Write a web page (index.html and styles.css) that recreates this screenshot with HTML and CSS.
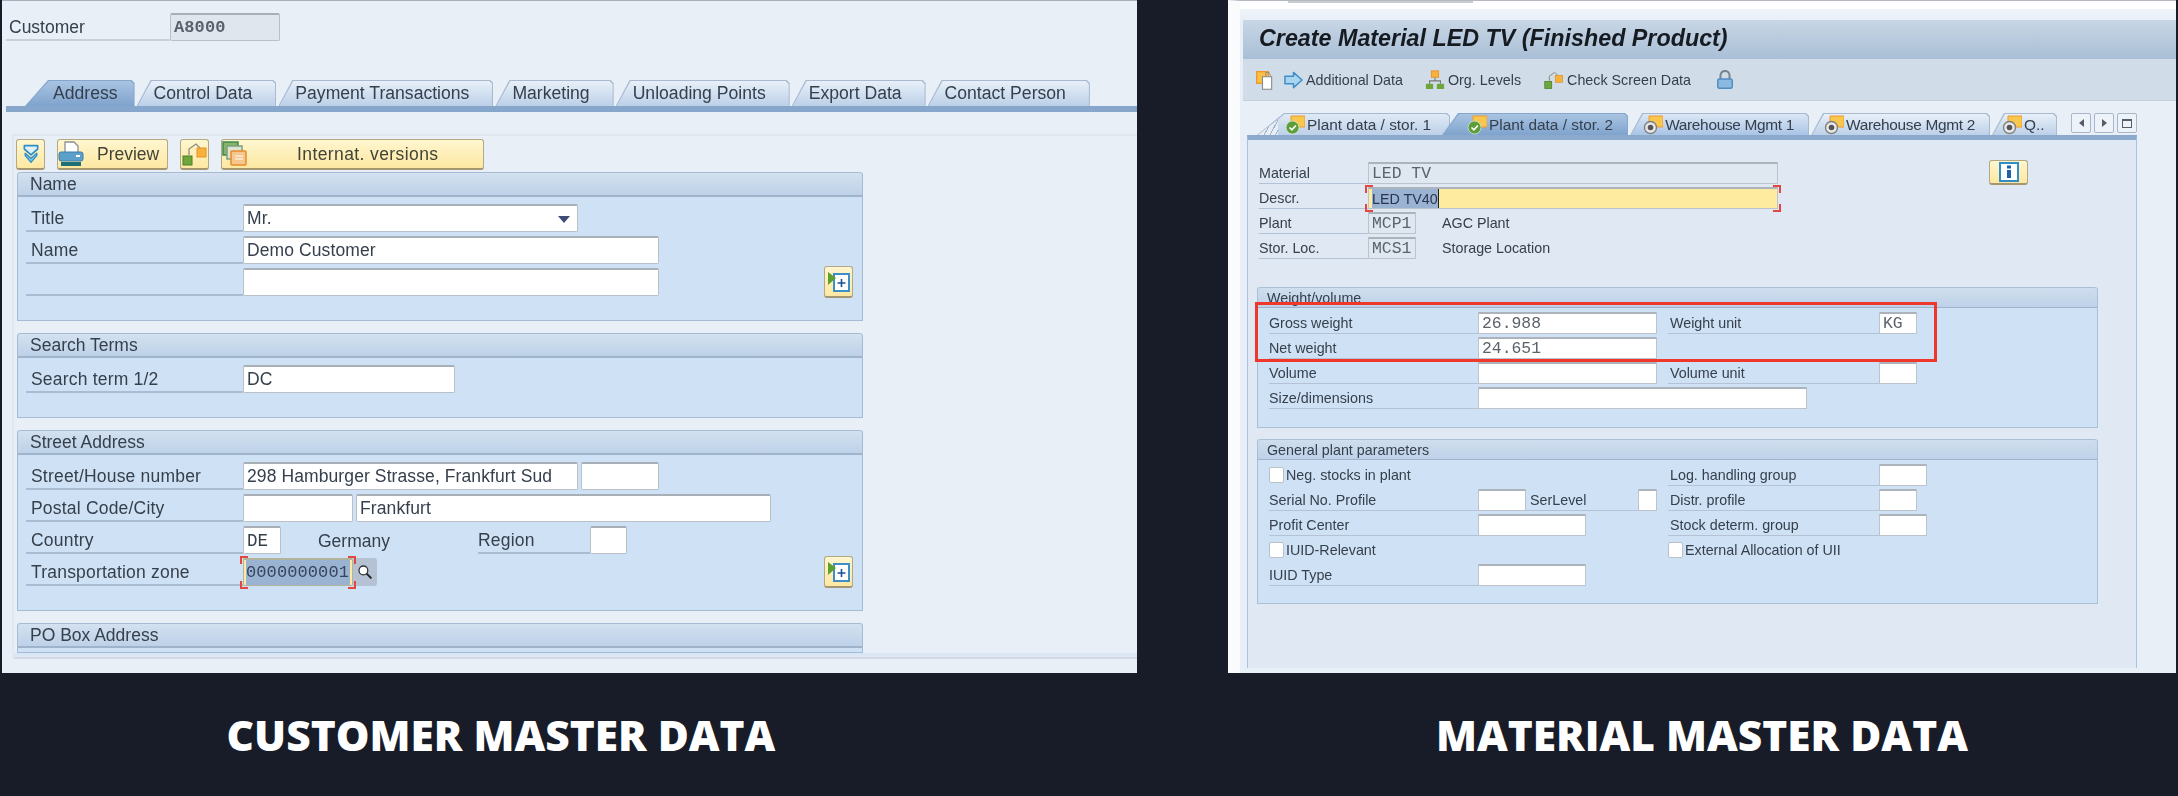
FILE: index.html
```html
<!DOCTYPE html>
<html>

<head>
    <meta charset="utf-8">
    <title>Customer and material master data</title>
    <link rel="stylesheet" href="styles.css">
</head>

<body>
    <svg class="defs" width="0" height="0">
        <symbol id="i-sort" viewBox="0 0 20 24">
            <path d="M2 2h16v4l-8 7-8-7z" fill="#dff0fa" stroke="#2f8fc4" stroke-width="2" stroke-linejoin="round" />
            <path d="M3 11l7 6 7-6v3l-7 8-7-8z" fill="#7cc0e4" stroke="#2f8fc4" stroke-width="1.5" stroke-linejoin="round" />
        </symbol>
        <symbol id="i-print" viewBox="0 0 26 26">
            <path d="M7 1h9l4 4v7H7z" fill="#fff" stroke="#8a8f96" stroke-width="1.3" />
            <rect x="1" y="11" width="24" height="9" rx="2" fill="#5b9fcb" stroke="#3f7fa8" />
            <rect x="18" y="14" width="4" height="2" fill="#fff" />
            <rect x="3" y="21" width="20" height="4" fill="#1f6f78" />
        </symbol>
        <symbol id="i-check" viewBox="0 0 26 26">
            <path d="M7 14V8l7-5 4 4" fill="none" stroke="#8d8d80" stroke-width="1.3" />
            <rect x="1" y="15" width="9" height="9" fill="#6fa53d" stroke="#4c8027" />
            <rect x="15" y="7" width="9" height="9" fill="#f7b23c" stroke="#e8912a" />
        </symbol>
        <symbol id="i-intl" viewBox="0 0 26 26">
            <rect x="1" y="1" width="15" height="13" fill="#87b36a" stroke="#3e8a4c" stroke-width="1.5" />
            <rect x="5" y="5" width="15" height="13" fill="#dfe4cf" stroke="#7ea080" stroke-width="1.5" />
            <rect x="9" y="10" width="15" height="14" rx="1" fill="#f6c68c" stroke="#e98a2c" stroke-width="1.5" />
            <path d="M13 15h8M13 18h8" stroke="#fff" />
        </symbol>
        <symbol id="i-expand" viewBox="0 0 24 26">
            <rect x="7" y="5" width="15" height="17" fill="#fff" stroke="#3f8fc7" stroke-width="2" />
            <path d="M14.500 10v8M10.500 14h8" stroke="#1f4f99" stroke-width="1.6" />
            <path d="M1 3l8 6-8 7z" fill="#5ea02d" />
        </symbol>
        <symbol id="i-clip" viewBox="0 0 22 24">
            <rect x="1" y="2" width="14" height="14" fill="#f7c046" stroke="#f0942e" stroke-width="1.5" />
            <path d="M8 8h11v15H8z" fill="#fff" stroke="#888" stroke-width="1.3" />
            <path d="M12 8V3h4l2 5" fill="none" stroke="#888" />
        </symbol>
        <symbol id="i-arrow" viewBox="0 0 20 18">
            <path d="M1 5h9V1l9 8-9 8v-4H1z" fill="#a9d4ef" stroke="#3f8fc7" stroke-width="1.6" stroke-linejoin="round" />
        </symbol>
        <symbol id="i-org" viewBox="0 0 22 22">
            <path d="M11 8v4M5 15v-3h12v3" fill="none" stroke="#777" stroke-width="1.2" />
            <rect x="7" y="1" width="8" height="7" fill="#f7b23c" stroke="#ea8f2a" />
            <rect x="1" y="15" width="8" height="6" rx="1" fill="#6fa53d" />
            <rect x="13" y="15" width="8" height="6" rx="1" fill="#6fa53d" />
        </symbol>
        <symbol id="i-lock" viewBox="0 0 20 22">
            <path d="M5 10V6a5 5 0 0 1 10 0v4" fill="none" stroke="#7b838c" stroke-width="2.200" />
            <rect x="2" y="10" width="16" height="10" rx="2" fill="#8cb9e0" stroke="#4f8dc2" stroke-width="1.600" />
        </symbol>
        <symbol id="i-info" viewBox="0 0 20 20">
            <rect x="1" y="1" width="18" height="18" fill="#fff" stroke="#2f8fc4" stroke-width="2" />
            <rect x="8" y="3.500" width="4" height="3" fill="#1f5fa8" />
            <rect x="8" y="8" width="4" height="8" fill="#1f5fa8" />
        </symbol>
        <symbol id="i-tabok" viewBox="0 0 20 20">
            <path d="M6 1h14v11H6z" fill="#f9c74e" stroke="#ef9a2c" />
            <circle cx="7.500" cy="12.500" r="6.500" fill="#5c9e3a" stroke="#d7e4cf" stroke-width=".8" />
            <path d="M4.500 12.500l2.400 2.400 4-4.400" fill="none" stroke="#fff" stroke-width="1.600" />
        </symbol>
        <symbol id="i-tabdot" viewBox="0 0 20 20">
            <path d="M6 1h14v11H6z" fill="#f9c74e" stroke="#ef9a2c" />
            <circle cx="7.500" cy="12.500" r="6" fill="#e8e8e8" stroke="#7f7f7f" stroke-width="1.400" />
            <circle cx="7.500" cy="12.500" r="2.800" fill="#555" />
        </symbol>
        <symbol id="i-search" viewBox="0 0 20 20">
            <circle cx="8" cy="8" r="5.500" fill="#fff" stroke="#333" stroke-width="1.600" />
            <path d="M12 12l6 6" stroke="#222" stroke-width="2.400" />
        </symbol>
    </svg>

    <div class="shots">
        <!-- customer screen -->
        <div class="cust">
            <div class="cust-head">
                <span class="lbl lbl-head">Customer</span>
                <span class="fld fld-ro mono fld-cust">A8000</span>
            </div>

            <div class="tabs">
                <span class="tab tab-on tab-first"><span class="tab-in">Address</span></span>
                <span class="tab"><span class="tab-in">Control Data</span></span>
                <span class="tab"><span class="tab-in">Payment Transactions</span></span>
                <span class="tab"><span class="tab-in">Marketing</span></span>
                <span class="tab"><span class="tab-in">Unloading Points</span></span>
                <span class="tab"><span class="tab-in">Export Data</span></span>
                <span class="tab"><span class="tab-in">Contact Person</span></span>
            </div>
            <div class="tab-bar"></div>

            <div class="scroller">
                <div class="btnrow">
                    <span class="btn btn-ico"><svg class="ico20"><use href="#i-sort" /></svg></span>
                    <span class="btn btn-preview"><svg class="ico26"><use href="#i-print" /></svg><span class="btn-txt">Preview</span></span>
                    <span class="btn btn-ico"><svg class="ico26"><use href="#i-check" /></svg></span>
                    <span class="btn btn-intl"><svg class="ico26"><use href="#i-intl" /></svg><span class="btn-txt">Internat. versions</span></span>
                </div>

                <div class="group">
                    <div class="group-head">Name</div>
                    <div class="group-body">
                        <div class="row">
                            <span class="lbl">Title</span>
                            <span class="fld w335 drop">Mr.</span>
                        </div>
                        <div class="row">
                            <span class="lbl">Name</span>
                            <span class="fld w416">Demo Customer</span>
                        </div>
                        <div class="row">
                            <span class="lbl"></span>
                            <span class="fld w416"></span>
                            <span class="btn btn-expand"><svg class="ico24"><use href="#i-expand" /></svg></span>
                        </div>
                    </div>
                </div>

                <div class="group">
                    <div class="group-head">Search Terms</div>
                    <div class="group-body">
                        <div class="row">
                            <span class="lbl">Search term 1/2</span>
                            <span class="fld w212">DC</span>
                        </div>
                    </div>
                </div>

                <div class="group">
                    <div class="group-head">Street Address</div>
                    <div class="group-body">
                        <div class="row">
                            <span class="lbl">Street/House number</span>
                            <span class="fld w335">298 Hamburger Strasse, Frankfurt Sud</span>
                            <span class="fld w78 ml3"></span>
                        </div>
                        <div class="row">
                            <span class="lbl">Postal Code/City</span>
                            <span class="fld w110"></span>
                            <span class="fld w415 ml3">Frankfurt</span>
                        </div>
                        <div class="row">
                            <span class="lbl">Country</span>
                            <span class="fld w38 mono">DE</span>
                            <span class="plain w160">Germany</span>
                            <span class="lbl lbl-region">Region</span>
                            <span class="fld w37"></span>
                        </div>
                        <div class="row">
                            <span class="lbl">Transportation zone</span>
                            <span class="fld w110 fld-focus mono corners"><span class="sel">0000000001</span></span>
                            <span class="search"><svg class="ico16"><use href="#i-search" /></svg></span>
                            <span class="btn btn-expand btn-expand2"><svg class="ico24"><use href="#i-expand" /></svg></span>
                        </div>
                    </div>
                </div>

                <div class="group group-cut">
                    <div class="group-head">PO Box Address</div>
                </div>
                <div class="scroll-foot"></div>
            </div>
        </div>

        <!-- material screen -->
        <div class="mat">
            <div class="mat-top"></div>
            <div class="mat-title">Create Material LED TV (Finished Product)</div>
            <div class="mat-tools">
                <svg class="ico20"><use href="#i-clip" /></svg>
                <span class="tool tool-a"><svg class="ico18"><use href="#i-arrow" /></svg>Additional Data</span>
                <span class="tool tool-o"><svg class="ico20"><use href="#i-org" /></svg>Org. Levels</span>
                <span class="tool tool-c"><svg class="ico20"><use href="#i-check" /></svg>Check Screen Data</span>
                <svg class="ico20 tool-l"><use href="#i-lock" /></svg>
            </div>

            <div class="mtabs">
                <span class="mtab mtab-first"><span class="tab-in"><svg class="ico20"><use href="#i-tabok" /></svg>Plant data / stor. 1</span></span>
                <span class="mtab mtab-on"><span class="tab-in"><svg class="ico20"><use href="#i-tabok" /></svg>Plant data / stor. 2</span></span>
                <span class="mtab mtab-mid mtab-wh"><span class="tab-in"><svg class="ico20"><use href="#i-tabdot" /></svg>Warehouse Mgmt 1</span></span>
                <span class="mtab mtab-wh"><span class="tab-in"><svg class="ico20"><use href="#i-tabdot" /></svg>Warehouse Mgmt 2</span></span>
                <span class="mtab mtab-last"><span class="tab-in"><svg class="ico20"><use href="#i-tabdot" /></svg>Q..</span></span>
                <span class="navs">
                    <span class="nav"><span class="tri tri-l"></span></span>
                    <span class="nav"><span class="tri tri-r"></span></span>
                    <span class="nav"><span class="nav-list"></span></span>
                </span>
            </div>

            <div class="mat-body">
                <div class="mrow">
                    <span class="mlbl">Material</span>
                    <span class="mfld mfld-ro mono w410">LED TV</span>
                    <span class="btn btn-info"><svg class="ico20"><use href="#i-info" /></svg></span>
                </div>
                <div class="mrow">
                    <span class="mlbl">Descr.</span>
                    <span class="mfld mfld-on w410 corners"><span class="sel">LED TV40</span><span class="caret"></span></span>
                </div>
                <div class="mrow">
                    <span class="mlbl">Plant</span>
                    <span class="mfld mfld-ro mono w48">MCP1</span>
                    <span class="mplain">AGC Plant</span>
                </div>
                <div class="mrow">
                    <span class="mlbl">Stor. Loc.</span>
                    <span class="mfld mfld-ro mono w48">MCS1</span>
                    <span class="mplain">Storage Location</span>
                </div>

                <div class="mgroup mgroup-weight">
                    <div class="mgroup-head">Weight/volume</div>
                    <div class="mgrid">
                        <span class="mlbl">Gross weight</span>
                        <span class="mcell"><span class="mfld mono w179">26.988</span></span>
                        <span class="mlbl mlbl-r">Weight unit</span>
                        <span class="mcell"><span class="mfld mono w38">KG</span></span>

                        <span class="mlbl">Net weight</span>
                        <span class="mcell"><span class="mfld mono w179">24.651</span></span>
                        <span class="mblank"></span>
                        <span class="mblank"></span>

                        <span class="mlbl">Volume</span>
                        <span class="mcell"><span class="mfld w179"></span></span>
                        <span class="mlbl mlbl-r">Volume unit</span>
                        <span class="mcell"><span class="mfld w38"></span></span>

                        <span class="mlbl">Size/dimensions</span>
                        <span class="mcell mcell-wide"><span class="mfld w329"></span></span>
                    </div>
                    <div class="redbox"></div>
                </div>

                <div class="mgroup">
                    <div class="mgroup-head">General plant parameters</div>
                    <div class="mgrid">
                        <span class="mchk mcell-left"><span class="box"></span>Neg. stocks in plant</span>
                        <span class="mlbl mlbl-r">Log. handling group</span>
                        <span class="mcell"><span class="mfld w48"></span></span>

                        <span class="mlbl">Serial No. Profile</span>
                        <span class="mcell mcell-line"><span class="mfld w48"></span><span class="mser">SerLevel</span><span class="mfld w19"></span></span>
                        <span class="mlbl mlbl-r">Distr. profile</span>
                        <span class="mcell"><span class="mfld w38"></span></span>

                        <span class="mlbl">Profit Center</span>
                        <span class="mcell"><span class="mfld w108"></span></span>
                        <span class="mlbl mlbl-r">Stock determ. group</span>
                        <span class="mcell"><span class="mfld w48"></span></span>

                        <span class="mchk mcell-left"><span class="box"></span>IUID-Relevant</span>
                        <span class="mchk mchk-r"><span class="box"></span>External Allocation of UII</span>

                        <span class="mlbl">IUID Type</span>
                        <span class="mcell"><span class="mfld w108"></span></span>
                    </div>
                </div>
            </div>
        </div>
    </div>

    <div class="captions">
        <div class="caption caption-l">CUSTOMER MASTER DATA</div>
        <div class="caption caption-r">MATERIAL MASTER DATA</div>
    </div>
</body>

</html>
```

FILE: styles.css
```css
* {
    box-sizing: border-box;
}

html,
body {
    margin: 0;
    padding: 0;
    overflow: hidden;
}

body {
    width: 2178px;
    height: 796px;
    background-color: #171c28;
    font-family: "Liberation Sans", Arial, sans-serif;
    color: #36404d;
}

.defs {
    position: absolute;
}

svg {
    display: block;
    flex: none;
}

.ico16 { width: 16px; height: 16px; }
.ico18 { width: 19px; height: 18px; }
.ico20 { width: 20px; height: 20px; }
.ico24 { width: 24px; height: 26px; }
.ico26 { width: 26px; height: 26px; }

.mono {
    font-family: "Liberation Mono", "Courier New", monospace;
}

.shots {
    display: flex;
    height: 673px;
    padding-left: 2px;
}

/* customer screen */

.cust {
    width: 1135px;
    height: 673px;
    padding: 12px 0 0 4px;
    background-color: #e8eff7;
    border-top: 1px solid #a9b0bd;
    font-size: 17.5px;
    filter: blur(0.55px);
}

.cust-head {
    display: flex;
    height: 28px;
}

.lbl {
    display: flex;
    align-items: center;
    flex: none;
    width: 217px;
    height: 100%;
    padding: 2px 0 0 5px;
    margin-left: 8px;
    border-bottom: 2px solid #a9bcd2;
    letter-spacing: 0.2px;
}

.lbl-head {
    width: 164px;
    margin-left: 0;
    padding-left: 3px;
    border-bottom-color: #c9cfd8;
    letter-spacing: 0;
}

.lbl-region {
    width: 112px;
    padding-left: 0;
    margin-left: 0;
}

.fld {
    display: flex;
    align-items: center;
    flex: none;
    height: 100%;
    padding: 0 3px;
    background-color: #fff;
    border: 1px solid #b9c0c8;
    border-top: 2px solid #a9afb7;
    border-radius: 2px;
    white-space: nowrap;
    position: relative;
    letter-spacing: 0.1px;
}

.fld-ro {
    background-color: #e0e6ee;
}

.fld-cust {
    width: 110px;
    font-size: 17px;
    font-weight: bold;
    color: #59616c;
}

.w335 { width: 335px; }
.w416 { width: 416px; }
.w415 { width: 415px; }
.w212 { width: 212px; }
.w110 { width: 110px; }
.w78 { width: 78px; }
.w38 { width: 38px; }
.w37 { width: 37px; }
.ml3 { margin-left: 3px; }

.w160 { width: 197px; padding: 2px 0 0 37px; flex: none; }

.plain {
    display: flex;
    align-items: center;
}

.drop::after {
    content: "";
    position: absolute;
    right: 7px;
    top: 10px;
    border-left: 6px solid transparent;
    border-right: 6px solid transparent;
    border-top: 7px solid #3e4d78;
}

/* tabs */

.tabs {
    display: flex;
    height: 26px;
    margin-top: 39px;
    padding-left: 19px;
}

.tab {
    --slope: 14px;
    display: block;
    height: 26px;
    padding: 1px 1px 0 1px;
    margin-right: 2px;
    background-color: #a6b9cf;
    clip-path: polygon(var(--slope) 0, calc(100% - 3px) 0, 100% 3px, 100% 100%, 0 100%);
}

.tab-in {
    display: flex;
    align-items: center;
    height: 100%;
    padding: 0 23px 0 16px;
    background: linear-gradient(#e8f0f9, #bcd0e8);
    clip-path: polygon(var(--slope) 0, calc(100% - 3px) 0, 100% 3px, 100% 100%, 0 100%);
    white-space: nowrap;
}

.tabs .tab-in {
    font-size: 17.6px;
}

.tab-on {
    background-color: #86a6cb;
}

.tab-on .tab-in {
    background: linear-gradient(#a9c4e2, #7fa3cd);
}

.tab-first {
    --slope: 23px;
    margin-right: 2px;
}

.tab-first .tab-in {
    padding: 0 16px 0 27px;
}

.tab-bar {
    height: 6px;
    background-color: #86a6cb;
}

.scroller {
    height: 525px;
    margin: 22px 0 0 6px;
    padding: 3px 0 0 2px;
    border-top: 2px solid #dfe6ef;
    border-left: 2px solid #e2e8f1;
}

.btnrow {
    display: flex;
    gap: 12px;
    height: 31px;
}

.btn {
    display: flex;
    align-items: center;
    justify-content: center;
    flex: none;
    background: linear-gradient(#fff6cf, #fde8a2);
    border: 1px solid #b3a884;
    border-bottom: 2px solid #a39671;
    border-radius: 3px;
}

.btn-ico {
    width: 29px;
    height: 100%;
}

.btn-preview {
    width: 111px;
    height: 100%;
    justify-content: flex-start;
    gap: 13px;
}

.btn-intl {
    width: 263px;
    height: 100%;
    justify-content: flex-start;
    gap: 49px;
}

.btn-intl .btn-txt {
    letter-spacing: 0.4px;
}

.btn-txt {
    color: #434437;
}

/* groups */

.group {
    width: 846px;
    margin: 2px 0 12px 1px;
    border: 1px solid #a6bbd3;
    border-top: 0;
    border-radius: 3px 3px 0 0;
}

.group + .group {
    margin-top: 0;
}

.group-head {
    display: flex;
    align-items: center;
    height: 25px;
    padding-left: 12px;
    background: linear-gradient(#d3e1f0, #bdd1e8);
    border-top: 1px solid #a6bbd3;
    border-bottom: 2px solid #9fb3ca;
    border-radius: 3px 3px 0 0;
}

.group-body {
    padding: 7px 0 24px;
    background-color: #cfe1f5;
}

.group-cut {
    margin-bottom: 0;
    height: 30px;
    background-color: #cfe1f5;
}

.scroll-foot {
    width: calc(100% + 2px);
    height: 6px;
    margin-left: -2px;
    background: linear-gradient(#d5e4f4, #dfe9f2);
    border-bottom: 2px solid #d2d9e4;
}

.row {
    display: flex;
    height: 28px;
    margin-bottom: 4px;
}

.row:last-child {
    margin-bottom: 0;
}

.btn-expand {
    width: 29px;
    height: 32px;
    margin: -2px 0 0 165px;
}

.btn-expand2 {
    margin-left: 447px;
}

.search {
    display: flex;
    align-items: center;
    justify-content: center;
    width: 24px;
    height: 100%;
    background-color: #b4c2d3;
    border-radius: 0 3px 3px 0;
}

.fld-focus {
    padding: 0 2px;
    background-color: #ffeb9f;
    border-color: #b2b39b;
}

.sel {
    display: inline-flex;
    align-items: center;
    height: 100%;
    background-color: #9ab3d3;
    color: #36455c;
}

.fld-focus .sel {
    flex: 1;
    font-size: 17px;
}

.corners::after {
    content: "";
    position: absolute;
    top: -4px;
    right: -4px;
    bottom: -4px;
    left: -4px;
    background:
        linear-gradient(#e2483d, #e2483d) 0 0 / 8px 2px no-repeat,
        linear-gradient(#e2483d, #e2483d) 0 0 / 2px 8px no-repeat,
        linear-gradient(#e2483d, #e2483d) 100% 0 / 8px 2px no-repeat,
        linear-gradient(#e2483d, #e2483d) 100% 0 / 2px 8px no-repeat,
        linear-gradient(#e2483d, #e2483d) 0 100% / 8px 2px no-repeat,
        linear-gradient(#e2483d, #e2483d) 0 100% / 2px 8px no-repeat,
        linear-gradient(#e2483d, #e2483d) 100% 100% / 8px 2px no-repeat,
        linear-gradient(#e2483d, #e2483d) 100% 100% / 2px 8px no-repeat;
}

/* material screen */

.mat {
    width: 948px;
    height: 673px;
    margin-left: 91px;
    background-color: #e8eff7;
    border-top: 1px solid #b4b8bf;
    border-left: 12px solid #f9fbfd;
    font-size: 14.3px;
    filter: blur(0.55px);
}

.mat-top {
    height: 19px;
    background: linear-gradient(#fff 40%, #eef3f8 45%, #e8eff7);
}

.mat-top::before {
    content: "";
    display: block;
    width: 185px;
    height: 2px;
    margin-left: 48px;
    background-color: #c8ccd2;
}

.mat-title {
    display: flex;
    align-items: center;
    height: 39px;
    margin-left: 3px;
    padding: 0 0 3px 16px;
    background: linear-gradient(#c8d6e5, #a9bfd6);
    font-size: 23.3px;
    font-weight: bold;
    font-style: italic;
    color: #161b22;
}

.mat-tools {
    display: flex;
    align-items: center;
    height: 42px;
    margin-left: 3px;
    padding-left: 12px;
    background-color: #d0dde9;
    border-bottom: 1px solid #c4d0dc;
}

.tool {
    display: flex;
    align-items: center;
    gap: 3px;
    white-space: nowrap;
}

.tool-a { margin-left: 9px; }
.tool-o { margin-left: 22px; }
.tool-c { margin-left: 23px; }
.tool-l { margin-left: 24px; }

.mtabs {
    display: flex;
    height: 22px;
    margin: 12px 0 0 7px;
    width: 890px;
    padding-left: 10px;
    font-size: 15.4px;
}

.mtab {
    --slope: 12px;
    display: block;
    height: 22px;
    padding: 1px 1px 0 1px;
    margin-right: 2px;
    background-color: #a6b9cf;
    clip-path: polygon(var(--slope) 0, calc(100% - 3px) 0, 100% 3px, 100% 100%, 0 100%);
}

.mtab .tab-in {
    gap: 2px;
    padding: 0 14px 0 12px;
}

.mtab-wh .tab-in {
    letter-spacing: -0.3px;
}

.mtab-first {
    --slope: 27px;
    margin-right: -8px;
}

.mtab-first .tab-in {
    padding: 0 18px 0 27px;
    background:
        linear-gradient(#dfeaf6, #bcd0e8) 20px 0 no-repeat,
        repeating-linear-gradient(119deg, #a3b4c8 0 1px, #e6edf5 1px 5px);
}

.mtab-on {
    position: relative;
    margin-right: 2px;
    --slope: 16px;
    background-color: #86a6cb;
}

.mtab-on .tab-in {
    padding: 0 14px 0 24px;
    background: linear-gradient(#a9c4e2, #7fa3cd);
}

.mtab-mid .tab-in {
    background: linear-gradient(#dbe7f5, #a9c4e6);
}

.mtab-last {
    width: 65px;
    margin-right: 0;
}

.mtab-last .tab-in {
    padding: 0 0 0 9px;
}

.navs {
    display: flex;
    gap: 3px;
    margin-left: auto;
    height: 20px;
}

.nav {
    display: flex;
    align-items: center;
    justify-content: center;
    width: 20px;
    height: 100%;
    background-color: #eef3f9;
    border: 1px solid #a8b7c9;
    border-radius: 2px;
}

.tri {
    border-top: 4px solid transparent;
    border-bottom: 4px solid transparent;
}

.tri-l { border-right: 5px solid #555d68; }
.tri-r { border-left: 5px solid #555d68; }

.nav-list {
    width: 10px;
    height: 9px;
    border: 1.5px solid #555d68;
    border-top-width: 2px;
}

.mat-body {
    position: relative;
    width: 890px;
    height: 533px;
    margin-left: 7px;
    padding: 22px 0 0 11px;
    background-color: #dfe8f3;
    border-top: 5px solid #8aa9cd;
    border-left: 1px solid #a9c3e2;
    border-right: 1px solid #a9c3e2;
}

.mrow {
    display: flex;
    height: 22px;
    margin-bottom: 3px;
}

.mlbl {
    display: flex;
    align-items: center;
    flex: none;
    width: 109px;
    height: 22px;
    padding-top: 1px;
    border-bottom: 1px solid #b3c2d4;
    white-space: nowrap;
}

.mfld {
    position: relative;
    display: flex;
    align-items: center;
    flex: none;
    height: 22px;
    padding: 0 3px;
    background-color: #fff;
    border: 1px solid #bcc3cb;
    border-top: 2px solid #adb3bb;
    border-radius: 1px;
    font-size: 14.3px;
    color: #5b626b;
    white-space: nowrap;
}

.mfld.mono {
    font-size: 16.4px;
}

.mfld-ro {
    background-color: #dfe7f1;
}

.mfld-on {
    background-color: #ffeb9f;
    color: #2a3550;
}

.mfld-on .sel {
    color: #2a3550;
}

.caret {
    width: 1px;
    height: 100%;
    background-color: #222;
}

.w410 { width: 410px; }
.w48 { width: 48px; }
.w179 { width: 179px; }
.w329 { width: 329px; }
.w108 { width: 108px; }
.w19 { width: 19px; }

.mplain {
    display: flex;
    align-items: center;
    margin-left: 26px;
}

.btn-info {
    width: 39px;
    height: 25px;
    margin: -2px 0 0 211px;
}

.mgroup {
    position: relative;
    width: 841px;
    margin: 28px 0 11px -2px;
    padding-bottom: 15px;
    background-color: #cfe1f5;
    border: 1px solid #a9c0d9;
    border-top: 0;
    border-radius: 3px 3px 0 0;
}

.mgroup + .mgroup {
    margin-top: 0;
    padding-bottom: 14px;
}

.mgroup-head {
    display: flex;
    align-items: center;
    height: 21px;
    padding-left: 9px;
    background: linear-gradient(#d0deee, #bdd1e8);
    border-top: 1px solid #a9c0d9;
    border-bottom: 1px solid #9fb3ca;
    border-radius: 3px 3px 0 0;
}

.mgrid {
    display: grid;
    grid-template-columns: 209px 179px 222px 1fr;
    grid-auto-rows: 25px;
    padding: 4px 0 0 11px;
}

.mgrid .mlbl {
    width: auto;
}

.mlbl-r {
    margin-left: 11px;
    padding-left: 2px;
}

.mcell-wide {
    grid-column: span 3;
}

.mcell-left {
    grid-column: span 2;
}

.mcell-line {
    display: flex;
    height: 22px;
    border-bottom: 1px solid #b3c2d4;
}

.mser {
    display: flex;
    align-items: center;
    flex: 1;
    padding-left: 4px;
}

.mchk {
    display: flex;
    align-items: center;
    gap: 2px;
    height: 22px;
}

.mchk-r {
    grid-column: span 2;
    margin-left: 11px;
}

.box {
    width: 15px;
    height: 16px;
    background-color: #fff;
    border: 1px solid #b9c0c8;
    border-radius: 2px;
}

.redbox {
    position: absolute;
    top: 15px;
    left: -3px;
    width: 682px;
    height: 60px;
    border: 3px solid #f0372b;
}

/* captions */

.captions {
    display: flex;
    margin-top: 37px;
}

.caption {
    font-family: "Open Sans", sans-serif;
    font-size: 42.4px;
    font-weight: 800;
    line-height: 50px;
    color: #fff;
    text-align: center;
    white-space: nowrap;
}

.caption-l { width: 1002px; }
.caption-r { width: 952px; margin-left: 224px; }
```
